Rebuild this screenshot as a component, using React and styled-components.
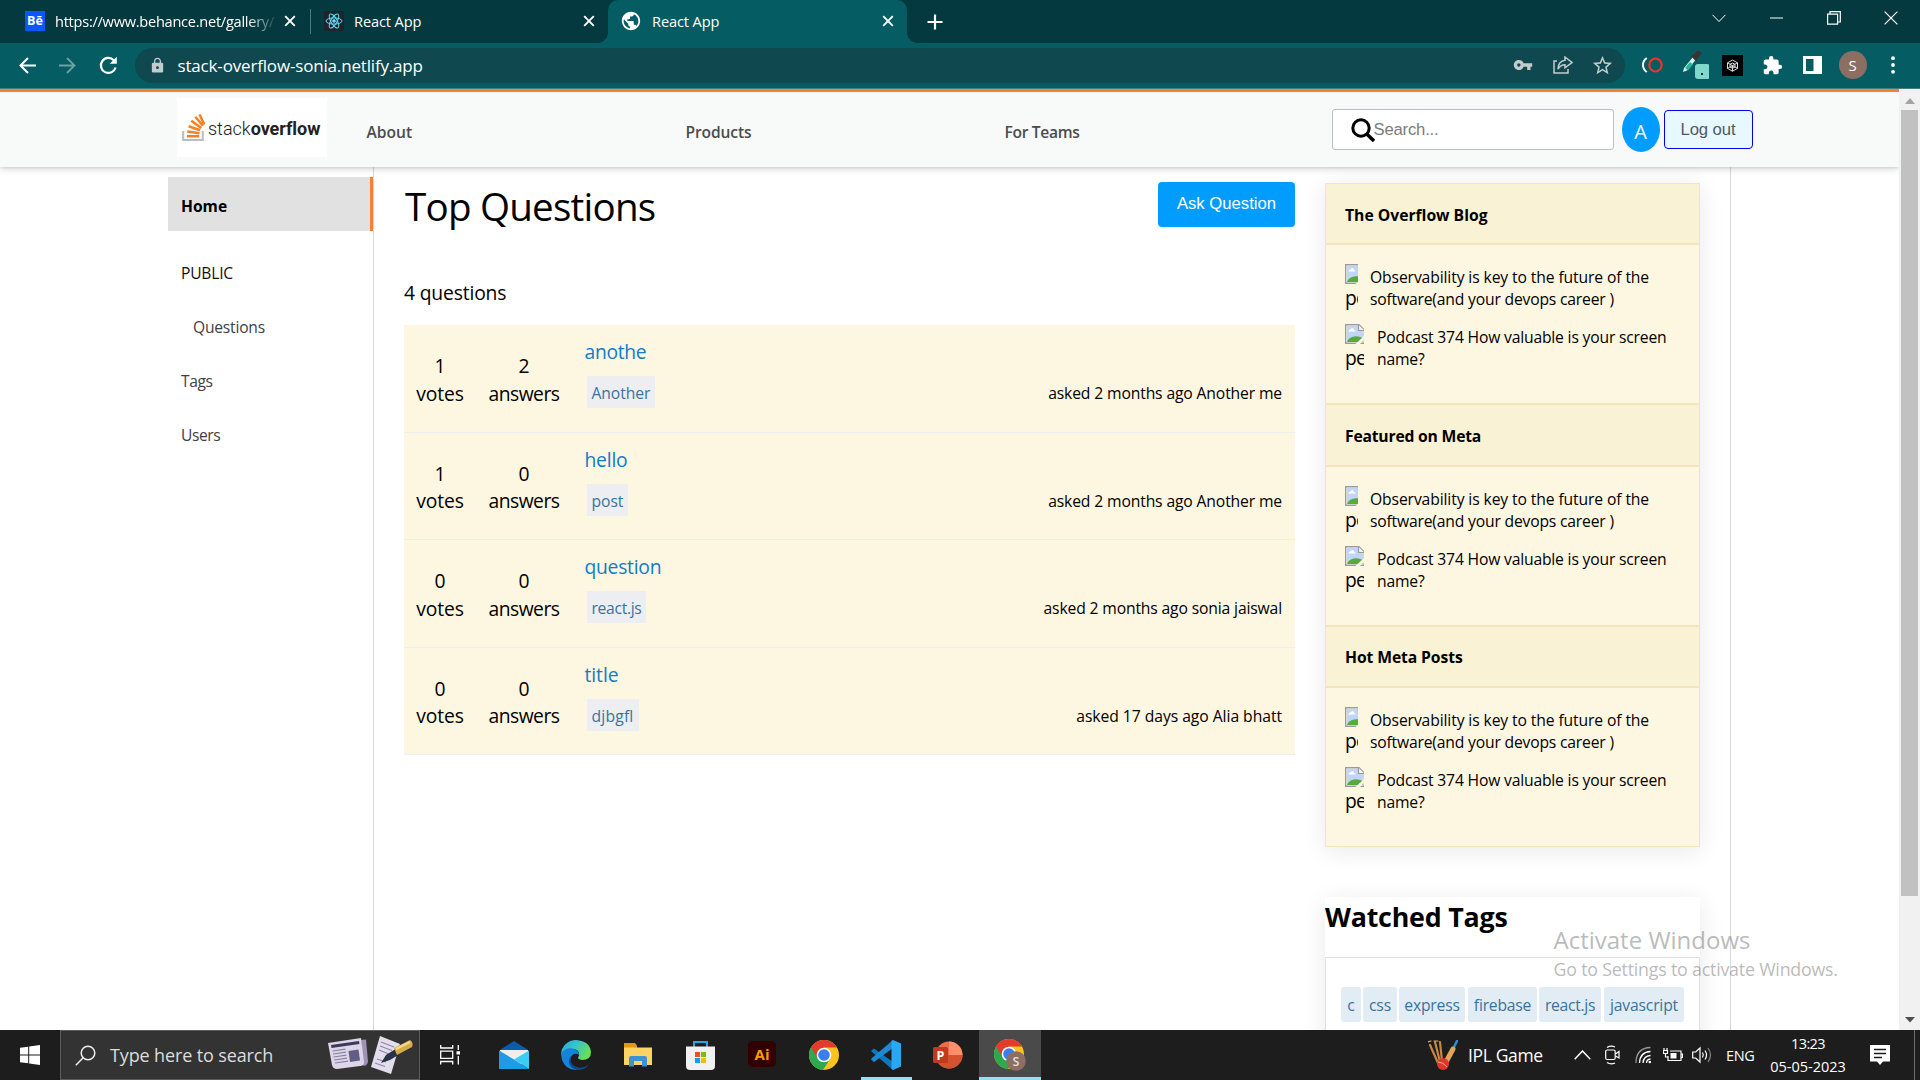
import React from "react";
import styled, { createGlobalStyle } from "styled-components";
import { MdVpnKey, MdStarBorder, MdLock, MdExtension, MdPublic } from "react-icons/md";

const ui = '"Open Sans", "Noto Sans", sans-serif';
const arial = '"Liberation Sans", Arial, sans-serif';

const Global = createGlobalStyle`
  * { box-sizing: border-box; }
  body { margin: 0; background: #fff; font-family: ${ui}; color: #000; overflow: hidden; }
  svg { display: block; flex: none; }
`;

const Screen = styled.div`
  width: 1920px; height: 1080px; display: flex; flex-direction: column; overflow: hidden;
`;
const Tracked = styled.span`letter-spacing: ${(p) => p.$ls}px;`;

/* ---------- browser chrome ---------- */
const TabStrip = styled.div`
  height: 43px; background: #03393f; display: flex; flex: none; color: #fff;
`;
const Tab = styled.div`
  position: relative; width: ${(p) => p.$w}px; padding: 0 ${(p) => p.$pr}px 1px ${(p) => p.$pl}px; height: 43px;
  display: flex; align-items: center;
  background: ${(p) => (p.$active ? "#055c62" : "transparent")};
  border-radius: 10px 10px 0 0;
  &::before, &::after {
    content: ""; position: absolute; bottom: 0; width: 10px; height: 10px;
    display: ${(p) => (p.$active ? "block" : "none")};
  }
  &::before { left: -10px; background: radial-gradient(circle at 0 0, transparent 9.5px, #055c62 10px); }
  &::after { right: -10px; background: radial-gradient(circle at 100% 0, transparent 9.5px, #055c62 10px); }
`;
const TabTitle = styled.span`
  font-size: 14.6px; letter-spacing: ${(p) => p.$ls || 0}px; margin-left: 10px; white-space: nowrap;
  width: ${(p) => p.$w}px; flex: none; line-height: 22px; padding-bottom: 1px;
  ${(p) => p.$fade && "mask-image: linear-gradient(90deg, #000 87%, rgba(0,0,0,.15) 99%);"}
`;
const Push = styled.span`flex: 1;`;
const TabDivider = styled.i`width: 1px; height: 25px; margin-top: 9px; background: #4d7a7e;`;
const BeBadge = styled.span`
  width: 20px; height: 20px; background: #0a57ff; color: #fff; font: 700 12.5px/20px ${ui}; text-align: center; flex: none;
`;
const ReactBadge = styled.span`
  width: 20px; height: 20px; border-radius: 2px; background: #20232a; display: grid; place-items: center; flex: none;
`;
const WinButtons = styled.div`display: flex; margin-left: auto; height: 36px;`;
const WinButton = styled.span`width: 57.5px; display: grid; place-items: center;`;

const Toolbar = styled.div`
  height: 46px; background: #055c62; border-bottom: 1px solid #3c8084; display: flex; flex: none;
  align-items: center; padding: 0 7px 1px 7px; color: #fff;
`;
const Slot = styled.span`width: ${(p) => p.$w || 40}px; display: grid; place-items: center; flex: none;`;
const Omnibox = styled.div`
  width: 1490px; height: 35px; border-radius: 18px; background: #0f494f; display: flex; align-items: center;
  padding: 0 2px 0 14px; margin-left: 6px; margin-right: 8px; color: #c3cbcc;
`;
const Url = styled.span`
  font-size: 17px; letter-spacing: -0.17px; color: #fff; margin-left: 12px; white-space: nowrap;
`;
const Profile = styled.span`
  width: 28px; height: 28px; border-radius: 50%; background: #8d6e63; display: grid; place-items: center; font-size: 15px;
`;

/* ---------- web page ---------- */
const Viewport = styled.div`height: 941px; display: flex; flex: none; overflow: hidden;`;
const Page = styled.div`width: 1899px; display: flex; flex-direction: column; background: #fff; overflow: hidden;`;
const Header = styled.header`
  height: 78px; border-top: 3px solid #f48236; background: #f8f9f9; display: flex; flex: none; position: relative; z-index: 2;
  padding-left: 177px; box-shadow: 0 1px 2px rgba(0,0,0,.06), 0 1px 6px rgba(0,0,0,.1), 0 2px 8px rgba(0,0,0,.1);
`;
const Logo = styled.div`
  width: 150px; height: 59px; margin-top: 6px; background: #fff; display: flex; align-items: center; padding: 0 0 0 5px;
`;
const LogoText = styled.span`
  font: 300 18px/24px Roboto, ${ui}; color: #222; margin: 2px 0 0 3px; letter-spacing: 0; white-space: nowrap;
  b { font-weight: 700; letter-spacing: -0.05px; }
`;
const Nav = styled.nav`
  display: grid; grid-template-columns: repeat(3, 319px); margin-left: 39.5px; align-items: center; padding-top: 4px;
`;
const NavLink = styled.a`
  font-size: 15.6px; font-weight: 600; color: #4c4c4c; letter-spacing: ${(p) => p.$ls || 0}px; white-space: nowrap;
  justify-self: start;
`;
const SearchBox = styled.div`
  width: 282px; height: 41px; border: 1px solid #babfc4; border-radius: 3px; background: #fff; margin: 17px 8px 0 8px;
  display: flex; align-items: center; padding-left: 18px;
`;
const Placeholder = styled.span`font: 16.7px ${arial}; color: #7c7c7c; letter-spacing: -0.2px; margin-left: -1px;`;
const Avatar = styled.span`
  width: 38px; height: 45px; border-radius: 50%; background: #009dff; color: #fff; display: grid; place-items: center;
  font-size: 20px; margin-top: 15px; padding-top: 3px;
`;
const LogOut = styled.span`
  width: 89px; height: 39px; margin: 18px 0 0 4px; border: 1px solid #0000f0; border-radius: 4px; background: #e7f8fe;
  color: #4f5a60; font: 16.7px ${arial}; letter-spacing: -0.1px; display: grid; place-items: center;
`;
const Columns = styled.div`display: flex; flex: 1; min-height: 0; padding-left: 168px;`;
const Sidebar = styled.aside`
  width: 206px; border-right: 1px solid #d6d9dc; padding-top: 10px; display: flex; flex-direction: column;
`;
const SideHome = styled.div`
  height: 54px; background: #e1e1e1; border-right: 3px solid #f48236; padding: 3px 0 0 13px; display: flex; align-items: center;
  font-size: 15.6px; font-weight: 700; margin-bottom: 14.4px;
`;
const SideItem = styled.div`
  height: 54.3px; padding-left: ${(p) => (p.$indent ? 25 : 13)}px; display: flex; align-items: center; font-size: 15.6px;
  color: ${(p) => p.$c || "#3d4045"};
`;
const Main = styled.main`width: 921px; padding: 15px 0 0 30px; display: flex; flex-direction: column;`;
const TitleRow = styled.div`display: flex; justify-content: space-between; height: 45px; align-items: center;`;
const Title = styled.h1`
  font-size: 38.6px; font-weight: 400; margin: 2px 0 0 1px; line-height: 50px; letter-spacing: -0.78px;
`;
const AskButton = styled.span`
  width: 137px; height: 45px; border-radius: 4px; background: #009dff; color: #fff; font: 16.7px ${arial};
  display: grid; place-items: center; padding-bottom: 1px;
`;
const Count = styled.div`
  font-size: 19.3px; line-height: 28px; margin: 52px 0 18px; letter-spacing: -0.16px;
`;
const QuestionRow = styled.div`
  height: 107.5px; background: #fdf6e0; border-bottom: 1px solid #eceef1; display: flex; flex: none;
`;
const Stat = styled.div`
  width: ${(p) => p.$w}px; padding-top: 27.4px; text-align: center; font-size: 19.3px; line-height: 27.2px;
`;
const Question = styled.div`flex: 1; padding: 13px 0 0 12.5px; display: flex; flex-direction: column; align-items: flex-start;`;
const QTitle = styled.a`font-size: 19.3px; line-height: 28px; color: #0f7cc9;`;
const QTag = styled.span`
  margin: 10px 0 0 2px; height: 32px; padding: 0 5px; background: #eceef1; color: #39739d; font-size: 15.7px; line-height: 34px;
`;
const Asked = styled.div`
  padding: 56.4px 13px 0 0; font-size: 15.7px; line-height: 24px; white-space: nowrap; letter-spacing: ${(p) => p.$ls || 0}px;
`;
const Right = styled.aside`
  width: 436px; padding: 16px 30px 0; border-right: 1px solid #d6d9dc; display: flex; flex-direction: column;
`;
const Widget = styled.section`
  background: #fdf6e0; box-shadow: 0 4px 24px rgba(0,0,0,.09); height: 664px; flex: none;
`;
const WidgetHead = styled.h4`
  margin: 0; height: 61.4px; border: 1px solid #f1e5bc; background: #faf2d5; padding: 2px 0 0 19px;
  font-size: 15.7px; font-weight: 700; display: flex; align-items: center;
`;
const WidgetBody = styled.div`
  height: 159.9px; border: 1px solid #f1e5bc; padding: 19px 19px 0; display: flex; flex-direction: column; gap: 16px;
`;
const Item = styled.div`display: flex; height: 44px;`;
const Broken = styled.span`
  width: ${(p) => p.$w}px; height: 46px; overflow: hidden; flex: none; font-size: 19.3px; line-height: 27px; letter-spacing: -0.9px;
`;
const ItemText = styled.p`
  margin: 2px 0 0 ${(p) => p.$ml}px; font-size: 15.7px; line-height: 22px; white-space: nowrap;
`;
const Watched = styled.section`
  margin-top: 50px; box-shadow: 0 4px 24px rgba(0,0,0,.09); background: #fff; height: 180px; flex: none;
`;
const WatchedTitle = styled.h2`
  margin: 0; height: 60px; font-size: 26.8px; line-height: 40px; font-weight: 700; letter-spacing: -0.2px;
`;
const TagList = styled.div`border: 1px solid #dfe1e3; height: 120px; padding: 29px 0 0 15px; display: flex;`;
const WTag = styled.span`
  width: ${(p) => p.$w}px; height: 35px; border-radius: 3px; background: #e1ecf4; color: #39739d; font-size: 15.7px; line-height: 37px;
  text-align: center; margin-right: ${(p) => p.$mr}px; white-space: nowrap;
`;
const Scrollbar = styled.div`
  width: 21px; background: #f1f1f1; display: flex; flex-direction: column; align-items: center; padding: 8px 0 7px;
`;
const Thumb = styled.i`width: 17px; height: 786px; background: #c1c1c1; margin: 5px 0 auto;`;
const Watermark = styled.div`
  position: absolute; left: 1553.5px; top: 923px; z-index: 5; color: rgba(120,120,120,.52); white-space: nowrap;
  font-size: 17.8px; line-height: 26px; letter-spacing: -0.2px;
`;
const WatermarkTitle = styled.div`font-size: 24px; line-height: 33px; letter-spacing: 0;`;

/* ---------- taskbar ---------- */
const Taskbar = styled.footer`height: 50px; background: #1d1d1d; color: #fff; display: flex; flex: none;`;
const TaskSearch = styled.div`
  width: 360px; background: #333; border: 1px solid #5c5c5c; display: flex; align-items: center; padding-left: 14px;
  color: #dcdcdc; font-size: 18px;
`;
const TaskSearchText = styled.span`margin: 0 53px 0 14px; width: 164px; white-space: nowrap; letter-spacing: -0.13px;`;
const TaskApp = styled.span`
  width: 62px; height: 50px; display: grid; place-items: center; flex: none; background: ${(p) => (p.$active ? "#4a4a4a" : "transparent")};
  box-shadow: ${(p) => (p.$active ? "inset 0 -3px #8fe3f1" : "none")};
`;
const RunningApp = styled(TaskApp)`
  background: linear-gradient(#8fe3f1, #8fe3f1) center bottom / 51px 3px no-repeat;
`;
const Tray = styled.div`margin-left: auto; display: flex; align-items: center;`;
const TrayText = styled.span`
  font-size: ${(p) => p.$s}px; letter-spacing: ${(p) => p.$ls || 0}px; white-space: nowrap; width: ${(p) => p.$w}px;
  margin-left: ${(p) => p.$ml || 0}px;
`;
const Clock = styled.div`
  width: 90px; text-align: center; font-size: 14.5px; line-height: 23px; padding-bottom: 1px;
`;
const DeskEdge = styled.i`width: 1px; height: 50px; background: #6e6e6e; margin: 0 5px 0 7px;`;

const Close = () => (
  <svg width="12" height="12" viewBox="0 0 12 12" stroke="#fff" strokeWidth="1.9"><path d="M1.2 1.2l9.6 9.6M10.8 1.2L1.2 10.8" /></svg>
);
const ReactMark = () => (
  <svg width="18" height="18" viewBox="0 0 18 18" fill="none" stroke="#61dafb" strokeWidth="1">
    <ellipse cx="9" cy="9" rx="8" ry="3.1" /><ellipse cx="9" cy="9" rx="8" ry="3.1" transform="rotate(60 9 9)" />
    <ellipse cx="9" cy="9" rx="8" ry="3.1" transform="rotate(120 9 9)" /><circle cx="9" cy="9" r="1.3" fill="#61dafb" />
  </svg>
);
const BrokenIcon = () => (
  <svg width="20" height="20" viewBox="0 0 20 20">
    <path d="M.7.7H14L19.3 6v13.3H.7z" fill="#fff" stroke="#9b9b9b" strokeWidth="1.4" />
    <path d="M2 2h11v5h5v11H2z" fill="#c2d5f7" />
    <path d="M3.5 7.5q0-2 2-2 .6-1.6 2.2-1.3Q9.2 4.5 9 6q1.8 0 1.5 1.5z" fill="#fff" />
    <path d="M2 18q1-3.500 5-5 5-2 11 1v4z" fill="#56ab3c" />
    <path d="M13.5.8V6.500H19.300" fill="#f2f2f2" stroke="#9b9b9b" strokeWidth="1.2" />
    <path d="M10.5 20L20 11v4l-5 5z" fill="#fdf6e0" />
  </svg>
);
const ChromeIcon = ({ badge }) => (
  <svg width={badge ? 32 : 30} height={badge ? 32 : 30} viewBox={badge ? "0 0 32 32" : "0 0 30 30"}>
    <circle cx="15" cy="15" r="15" fill="#fcc31e" />
    <path d="M2 7.5A15 15 0 0 0 14 30L21.300 18.700 15 15z" fill="#2da94f" />
    <path d="M2 7.500A15 15 0 0 1 28 7.500H15L8.600 18.500z" fill="#e33b2e" />
    <path d="M2 7.500L8.600 18.600 11 17 9 10z" fill="#2da94f" />
    <path d="M2 7.500L5 4 11 9 8.500 12 8.700 18.600z" fill="#e33b2e" />
    <path d="M2 7.500L8.600 18.700 6 20 .5 14z" fill="#2da94f" />
    <circle cx="15" cy="15" r="7.3" fill="#fff" /><circle cx="15" cy="15" r="5.8" fill="#3b7ded" />
    {badge && (<g><circle cx="22" cy="22" r="9.8" fill="#8d6e63" />
      <text x="22" y="26.5" fontSize="12.500" fontWeight="600" fill="#e6dcd8" textAnchor="middle" fontFamily="Open Sans">S</text></g>)}
  </svg>
);

const sections = [["The Overflow Blog", 0], ["Featured on Meta", -0.2], ["Hot Meta Posts", -0.1]];
const questions = [
  [1, 2, "anothe", "Another", "asked 2 months ago Another me", -0.3, -0.1, -0.14],
  [1, 0, "hello", "post", "asked 2 months ago Another me", -0.2, -0.05, -0.14],
  [0, 0, "question", "react.js", "asked 2 months ago sonia jaiswal", -0.26, -0.33, -0.15],
  [0, 0, "title", "djbgfl", "asked 17 days ago Alia bhatt", -0.06, 0.18, -0.05],
];
const watched = [["c", 20, 2, 0], ["css", 34, 2, -0.1], ["express", 66, 3, -0.2], ["firebase", 69, 2, -0.22], ["react.js", 62, 3, -0.3], ["javascript", 80, 0, -0.18]];

export default function App() {
  return (
    <Screen>
      <Global />
      <TabStrip>
        <Tab $w={310} $pl={25} $pr={14}>
          <BeBadge>Bē</BeBadge><TabTitle $w={221} $ls={-0.27} $fade>https://www.behance.net/gallery/</TabTitle><Push /><Close />
        </Tab>
        <TabDivider />
        <Tab $w={297} $pl={13} $pr={13}>
          <ReactBadge><ReactMark /></ReactBadge><TabTitle $w={100} $ls={-0.12}>React App</TabTitle><Push /><Close />
        </Tab>
        <Tab $w={299} $pl={12} $pr={13} $active>
          <MdPublic size={22} /><TabTitle $w={100} $ls={-0.12}>React App</TabTitle><Push /><Close />
        </Tab>
        <Slot $w={56}>
          <svg width="16" height="16" stroke="#fff" strokeWidth="2.2"><path d="M8 .5v15M.5 8h15" /></svg>
        </Slot>
        <WinButtons>
          <WinButton><svg width="14" height="9" fill="none" stroke="#fff"><path d="M.5.8L7 7.500 13.500.8" /></svg></WinButton>
          <WinButton><svg width="13" height="2"><path d="M0 1h13" stroke="#fff" /></svg></WinButton>
          <WinButton><svg width="14" height="14" fill="none" stroke="#fff" strokeWidth="1.2"><path d="M.6 3.200h10v10h-10zM3 3V.7h10.300V11H11" /></svg></WinButton>
          <WinButton><svg width="14" height="14" fill="none" stroke="#fff" strokeWidth="1.2"><path d="M.6.6l12.800 12.800M13.400.6L.6 13.400" /></svg></WinButton>
        </WinButtons>
      </TabStrip>
      <Toolbar>
        <Slot $w={40.5}><svg width="17" height="17" fill="none" stroke="#fff" strokeWidth="2"><path d="M17 8.500H1.800M9 1L1.500 8.500 9 16" /></svg></Slot>
        <Slot $w={40.5}><svg width="17" height="17" fill="none" stroke="#6d9fa3" strokeWidth="1.8"><path d="M0 8.500h15.200M8 1l7.500 7.500L8 16" /></svg></Slot>
        <Slot $w={40.5}><svg width="19" height="19" fill="none" stroke="#fff" strokeWidth="2.2"><path d="M16.600 11.500A7.500 7.500 0 1 1 14.800 4.200L16.500 6" /><path d="M17.800.8v7h-7z" fill="#fff" stroke="none" /></svg></Slot>
        <Omnibox>
          <MdLock size={17} /><Url>stack-overflow-sonia.netlify.app</Url><Push />
          <Slot><MdVpnKey size={20} /></Slot>
          <Slot><svg width="20" height="18" fill="none" stroke="#c3cbcc" strokeWidth="1.5"><path d="M4 5H1v12h14v-4" /><path d="M12 1l7 5.500-7 5.300V8.700Q7.500 8.700 5 13 5.500 5 12 4.300z" /></svg></Slot>
          <Slot><MdStarBorder size={23} /></Slot>
        </Omnibox>
        <Slot><svg width="21" height="16" fill="none"><path d="M4.800 1Q1 3.500 1 8t3.800 7" stroke="#fff" strokeWidth="2" /><ellipse cx="13.500" cy="8" rx="6.200" ry="6.500" stroke="#f0312d" strokeWidth="2.200" /></svg></Slot>
        <Slot><svg width="32" height="30"><path d="M7 18l9-11 3 2.500-9 11-4 1.500z" fill="#d8f1ee" /><path d="M8 18l5-6 3 2.500-5 6z" fill="#29b6a0" /><path d="M14 6l2-1 4-4q4-1 4.500 2.500L20 9l-.5 3z" fill="#3b3333" /><rect x="18" y="14" width="15" height="15" rx="3" fill="#7fd8cb" /><rect x="24" y="23" width="2" height="2" fill="#123" /></svg></Slot>
        <Slot><svg width="21" height="21"><rect width="21" height="21" fill="#000" /><g fill="none" stroke="#ddd" strokeWidth="1"><path d="M10.500 5l5 2.800v5.600l-5 2.800-5-2.800V7.800z" /><path d="M10.500 8l2.500 1.300v2.700l-2.500 1.300L8 12V9.300zM5.500 7.800l5 2.800 5-2.800M10.500 10.500v6M5.500 13.400l5-2.800 5 2.800" /></g></svg></Slot>
        <Slot><MdExtension size={21} /></Slot>
        <Slot><svg width="19" height="18"><path d="M0 0h19v18H0zM3 3v12h7.500V3z" fill="#fff" fillRule="evenodd" /></svg></Slot>
        <Slot><Profile>S</Profile></Slot>
        <Slot><svg width="4" height="18" fill="#fff"><circle cx="2" cy="2.200" r="1.900" /><circle cx="2" cy="9" r="1.900" /><circle cx="2" cy="15.800" r="1.900" /></svg></Slot>
      </Toolbar>

      <Viewport>
        <Page>
          <Header>
            <Logo>
              <svg width="23" height="28" viewBox="0 0 23 28" fill="none">
                <path d="M1.200 17v9h19.600v-9" stroke="#bcbbbb" strokeWidth="2" />
                <g stroke="#f48024" strokeWidth="2.5"><path d="M5 22.300h12.300M5.300 17.600l12.200 1.600M6.600 12.300l11.500 4M9.300 6.800l10 7.300M13.300 2.800l7.600 9M17.500.5l4.800 10" /></g>
              </svg>
              <LogoText>stack<b>overflow</b></LogoText>
            </Logo>
            <Nav>
              <NavLink>About</NavLink><NavLink $ls={-0.12}>Products</NavLink><NavLink $ls={-0.32}>For Teams</NavLink>
            </Nav>
            <SearchBox>
              <svg width="24" height="24" fill="none" stroke="#000" strokeWidth="3"><circle cx="10" cy="10" r="8.200" /><path d="M15.500 15.800l7.500 7.200" strokeWidth="3.5" /></svg>
              <Placeholder>Search...</Placeholder>
            </SearchBox>
            <Avatar>A</Avatar>
            <LogOut>Log out</LogOut>
          </Header>
          <Columns>
            <Sidebar>
              <SideHome>Home</SideHome>
              <SideItem $c="#111"><Tracked $ls={-0.2}>PUBLIC</Tracked></SideItem>
              <SideItem $indent><Tracked $ls={-0.2}>Questions</Tracked></SideItem>
              <SideItem><Tracked $ls={-0.4}>Tags</Tracked></SideItem>
              <SideItem><Tracked $ls={-0.45}>Users</Tracked></SideItem>
            </Sidebar>
            <Main>
              <TitleRow><Title>Top Questions</Title><AskButton>Ask Question</AskButton></TitleRow>
              <Count>4 questions</Count>
              {questions.map(([v, a, t, tag, asked, tl, gl, al]) => (
                <QuestionRow key={t}>
                  <Stat $w={72}>{v}<br /><Tracked $ls={-0.1}>votes</Tracked></Stat>
                  <Stat $w={96}>{a}<br /><Tracked $ls={-0.5}>answers</Tracked></Stat>
                  <Question><QTitle><Tracked $ls={tl}>{t}</Tracked></QTitle><QTag><Tracked $ls={gl}>{tag}</Tracked></QTag></Question>
                  <Asked $ls={al}>{asked}</Asked>
                </QuestionRow>
              ))}
            </Main>
            <Right>
              <Widget>
                {sections.map(([h, ls]) => (
                  <React.Fragment key={h}>
                    <WidgetHead><Tracked $ls={ls}>{h}</Tracked></WidgetHead>
                    <WidgetBody>
                      <Item>
                        <Broken $w={13}><BrokenIcon />pe</Broken>
                        <ItemText $ml={12}>
                          <Tracked $ls={-0.12}>Observability is key to the future of the</Tracked><br />
                          <Tracked $ls={-0.19}>software(and your devops career )</Tracked>
                        </ItemText>
                      </Item>
                      <Item>
                        <Broken $w={19}><BrokenIcon />pe</Broken>
                        <ItemText $ml={13}>
                          <Tracked $ls={-0.19}>Podcast 374 How valuable is your screen</Tracked><br />
                          <Tracked $ls={-0.19}>name?</Tracked>
                        </ItemText>
                      </Item>
                    </WidgetBody>
                  </React.Fragment>
                ))}
              </Widget>
              <Watched>
                <WatchedTitle>Watched Tags</WatchedTitle>
                <TagList>{watched.map(([t, w, mr, ls]) => <WTag key={t} $w={w} $mr={mr}><Tracked $ls={ls}>{t}</Tracked></WTag>)}</TagList>
              </Watched>
            </Right>
          </Columns>
        </Page>
        <Scrollbar>
          <svg width="10" height="8"><path d="M5 1l5 6H0z" fill="#a3a3a3" /></svg>
          <Thumb />
          <svg width="10" height="6"><path d="M0 0h10L5 5.500z" fill="#505050" /></svg>
        </Scrollbar>
      </Viewport>
      <Watermark><WatermarkTitle>Activate Windows</WatermarkTitle>Go to Settings to activate Windows.</Watermark>

      <Taskbar>
        <Slot $w={60}><svg width="20" height="20" fill="#fff"><path d="M0 2.800l8.200-1.100v7.800H0zM9.200 1.500L20 0v9.500H9.200zM0 10.500h8.200v7.800L0 17.200zM9.200 10.500H20V20L9.200 18.500z" /></svg></Slot>
        <TaskSearch>
          <svg width="21" height="21" fill="none" stroke="#eee" strokeWidth="1.5"><circle cx="13" cy="8" r="6.800" /><path d="M8.200 12.800L.8 20.200" /></svg>
          <TaskSearchText>Type here to search</TaskSearchText>
          <svg width="88" height="42" viewBox="0 0 88 42">
            <path d="M34 6l5-.5 2 22q-1 5-5 4z" fill="#9d93b5" /><path d="M1 9L34 4l3 24q0 4-4 4L10 35q-4 0-5-4z" fill="#dcd6e8" />
            <path d="M4 11l28-4 .4 3L4.500 14z" fill="#3d3a5c" /><path d="M21.500 17l10-1.500 1.500 11-10 1.500z" fill="#625d85" />
            <path d="M5.500 17l13-1.800M6 20l13-1.800M6.500 23l13-1.800M7 26l13-1.800M8 29l13-1.800" stroke="#8883a3" strokeWidth="1.2" />
            <path d="M53 2l20 8-9 30-20-7z" fill="#e3ddec" /><path d="M54 8l13 5M53 12l12 4.500M52 16l10 4M50 25l9 3M48 29l10 3.500" stroke="#8f87a8" strokeWidth="1.2" />
            <path d="M54 29l5-8 16-10 3 6-15 9z" fill="#293346" /><path d="M67 14l16-8q4 3 2 7L70 21z" fill="#d6ad49" /><path d="M69 15l14-7" stroke="#f6dd8e" strokeWidth="2" />
          </svg>
        </TaskSearch>
        <Slot $w={60}><svg width="20" height="20" fill="none" stroke="#fff" strokeWidth="1.3"><path d="M.7 0v3h12V0M.7 6.200h12v7.200H.7zM.7 19.500v-3h12v3M18.300 0v5M18.300 11v8.500" /><path d="M16.500 6.200h3.500v3.300h-3.500z" fill="#fff" stroke="none" /></svg></Slot>
        <Slot $w={3} />
        <TaskApp><svg width="30" height="28"><path d="M0 9.500L15 0l15 9.500z" fill="#0b5cab" /><path d="M1 9h28v14H1z" fill="#eee" /><path d="M0 9.500L15 18.500 30 28H0z" fill="#1e9be6" /><path d="M30 9.500L15 18.500 30 28z" fill="#3ccdf7" /></svg></TaskApp>
        <TaskApp><svg width="30" height="30">
          <defs><linearGradient id="eg" x1="0" x2="1" y1=".1" y2=".5"><stop offset="0" stopColor="#2aa9e0" /><stop offset=".5" stopColor="#38c6c8" /><stop offset="1" stopColor="#6be04f" /></linearGradient></defs>
          <path d="M0 14A15 15 0 0 1 15 0q14 1 15 12 0 8-9 8-6-1-3-4 1-6-5-7Q5 9 0 14z" fill="url(#eg)" />
          <path d="M0 14Q4 7 12 8.500q6 1.500 6 6.500-2-2-5-1-4 2-3.500 7Q10 27 17 29.800 5 31 1 20z" fill="#1683d8" />
          <path d="M10 16q-2 7 4 10.500 7 3 14-2Q24 30 16 30 8 28 8 21q0-3 2-5z" fill="#114a8b" /></svg></TaskApp>
        <TaskApp><svg width="28" height="24"><path d="M0 0h11l2 2.500v4H0z" fill="#dc9a0c" /><path d="M0 4.500h28V22H0z" fill="#fcd364" /><path d="M5 23.500V15q0-2 2-2h14q2 0 2 2v8.500h-5V18h-8v5.500z" fill="#3e92d1" /></svg></TaskApp>
        <TaskApp><svg width="29" height="29"><path d="M8 6V1h13v5" fill="none" stroke="#2aa4e2" strokeWidth="2" /><path d="M0 5.500h29V25q0 4-4 4H4q-4 0-4-4z" fill="#f1f1f1" /><path d="M9 11h5v5H9z" fill="#f25022" /><path d="M15 11h5v5h-5z" fill="#7fba00" /><path d="M9 17h5v5H9z" fill="#00a4ef" /><path d="M15 17h5v5h-5z" fill="#ffb900" /></svg></TaskApp>
        <TaskApp><svg width="28" height="28"><rect width="28" height="26" rx="4.5" fill="#330000" /><text x="14" y="18.500" fontSize="15" fontWeight="700" fill="#ff9a00" textAnchor="middle" fontFamily="Open Sans">Ai</text></svg></TaskApp>
        <TaskApp><ChromeIcon /></TaskApp>
        <RunningApp><svg width="30" height="30"><path d="M0 11l3-2.500L22 22v8L1 12z" fill="#0f77bd" /><path d="M0 19.500L3 22 22 8V0L1 18z" fill="#1b8ad3" /><path d="M22 0l8 3.500v23L22 30l-1.500-1z M20.500 1L22 0v30l-1.500-1z" fill="#2aa7f2" /></svg></RunningApp>
        <TaskApp><svg width="30" height="28"><circle cx="16" cy="14" r="13.5" fill="#ee6c4a" /><path d="M16 .5A13.500 13.500 0 0 1 29.500 14H16z" fill="#ff8f6b" /><path d="M2.500 14h27a13.500 13.500 0 0 1-27 0z" fill="#d35230" /><rect y="6" width="15" height="16" rx="1.500" fill="#c13b1b" /><text x="7.500" y="18.500" fontSize="12.500" fontWeight="700" fill="#fff" textAnchor="middle" fontFamily="Open Sans">P</text></svg></TaskApp>
        <TaskApp $active><ChromeIcon badge /></TaskApp>
        <Tray>
          <svg width="30" height="30"><g strokeLinecap="round"><path d="M2 5l8 18M7 2l5 20M12 2l2 19" stroke="#c48a45" strokeWidth="2.2" /><path d="M0 2l3-1M6 1h4" stroke="#dcb27a" strokeWidth="1.2" /><path d="M29 1l-3 6" stroke="#2b8fd8" strokeWidth="2.5" /><path d="M25 9L18 22" stroke="#e2a659" strokeWidth="5" /></g><circle cx="15" cy="24" r="6" fill="#e0352b" /><path d="M10 22q5 0 9 5" stroke="#f9a79a" fill="none" /></svg>
          <TrayText $s={17.5} $w={99} $ml={10} $ls={-0.35}>IPL Game</TrayText>
          <Slot $w={30}><svg width="17" height="10" fill="none" stroke="#fff" strokeWidth="1.5"><path d="M.7 9.200L8.500 1l7.800 8.200" /></svg></Slot>
          <Slot $w={31}><svg width="15" height="20" fill="none" stroke="#fff" strokeWidth="1.2"><rect x=".7" y="5" width="9.500" height="9.500" rx="1.500" /><path d="M10.500 9l3.500-2.500v6.500L10.500 11M2 2.500Q6 0 10 2M2 17.500q4 2.500 8 .5" /></svg></Slot>
          <Slot $w={30}><svg width="17" height="18" fill="none" stroke="#fff" strokeWidth="1.3"><path d="M1 17Q1 2 15.500 1.500" stroke="#999" /><path d="M4.500 17Q5 6 15.500 5.500M8 17q.5-7 7.500-7.500M11.500 17q0-3.500 4-4" /><circle cx="14.800" cy="16" r="1.300" fill="#fff" stroke="none" /></svg></Slot>
          <Slot $w={29}><svg width="20" height="14" fill="none" stroke="#fff" strokeWidth="1.2"><path d="M7 3h11v9.500H5V8M18.500 6h1v3.500h-1" /><path d="M7.500 5h6v5.500h-6z" fill="#fff" stroke="none" /><path d="M1 0v2.500M4 0v2.500M.5 2.500h4v3h-4zM2.500 5.500V9H5" /></svg></Slot>
          <Slot $w={30}><svg width="20" height="18" fill="none" stroke="#fff" strokeWidth="1.2"><path d="M.7 6h3L8 2v14l-4.300-4h-3z" /><path d="M10.500 6.500q1.500 2.500 0 5M13 4.500q3 4.500 0 9" /><path d="M16 2q5 7 0 14" stroke="#888" /></svg></Slot>
          <TrayText $s={14.5} $w={37} $ml={9} $ls={-0.4}>ENG</TrayText>
          <Clock><Tracked $ls={-0.6}>13:23</Tracked><br />05-05-2023</Clock>
          <Slot $w={54}><svg width="20" height="20"><path d="M0 0h20v16.500h-7L10 20l-3-3.500H0z" fill="#fff" /><path d="M4 4.500h12M4 8.500h12M4 12.500h8" stroke="#1d1d1d" strokeWidth="1.3" /></svg></Slot>
          <DeskEdge />
        </Tray>
      </Taskbar>
    </Screen>
  );
}
